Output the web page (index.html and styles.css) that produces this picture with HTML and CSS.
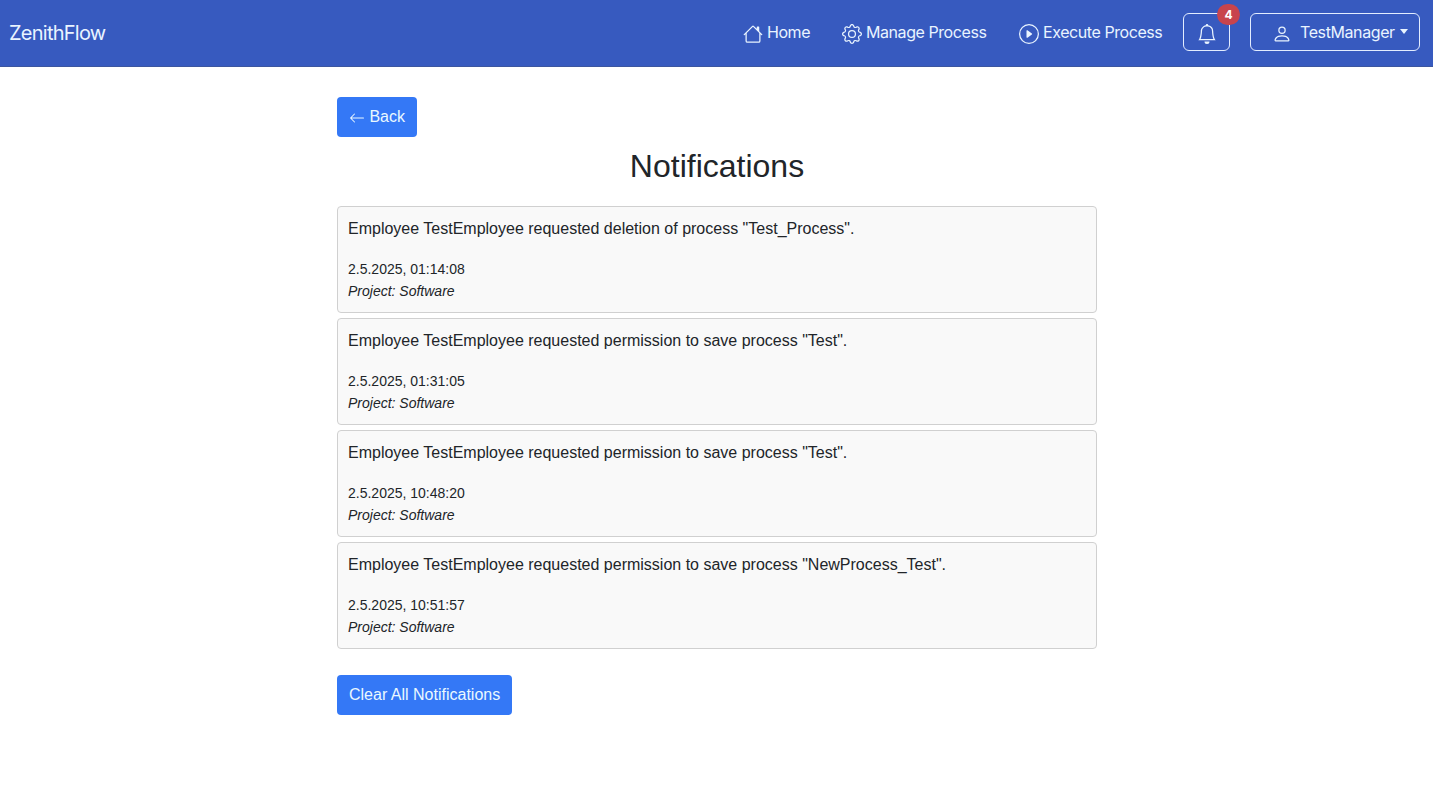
FILE: index.html
```html
<!DOCTYPE html>
<html lang="en">
<head>
<meta charset="utf-8">
<title>ZenithFlow</title>
<link rel="stylesheet" href="styles.css">
</head>
<body>
<header class="navbar">
  <a class="brand">ZenithFlow</a>
  <nav class="links">
    <a class="link home"><svg class="icon" viewBox="0 0 16 16"><path d="M8.707 1.5a1 1 0 0 0-1.414 0L.646 8.146a.5.5 0 0 0 .708.708L2 8.207V13.5A1.5 1.5 0 0 0 3.5 15h9a1.5 1.5 0 0 0 1.5-1.5V8.207l.646.647a.5.5 0 0 0 .708-.708L13 5.793V2.5a.5.5 0 0 0-.5-.5h-1a.5.5 0 0 0-.5.5v1.293zM13 7.207V13.5a.5.5 0 0 1-.5.5h-9a.5.5 0 0 1-.5-.5V7.207l5-5z"/></svg><span>Home</span></a>
    <a class="link manage"><svg class="icon" viewBox="0 0 16 16"><path d="M8 4.754a3.246 3.246 0 1 0 0 6.492 3.246 3.246 0 0 0 0-6.492M5.754 8a2.246 2.246 0 1 1 4.492 0 2.246 2.246 0 0 1-4.492 0"/><path d="M9.796 1.343c-.527-1.79-3.065-1.79-3.592 0l-.094.319a.873.873 0 0 1-1.255.52l-.292-.16c-1.64-.892-3.433.902-2.54 2.541l.159.292a.873.873 0 0 1-.52 1.255l-.319.094c-1.79.527-1.79 3.065 0 3.592l.319.094a.873.873 0 0 1 .52 1.255l-.16.292c-.892 1.64.901 3.434 2.541 2.54l.292-.159a.873.873 0 0 1 1.255.52l.094.319c.527 1.79 3.065 1.79 3.592 0l.094-.319a.873.873 0 0 1 1.255-.52l.292.16c1.64.893 3.434-.902 2.54-2.541l-.159-.292a.873.873 0 0 1 .52-1.255l.319-.094c1.79-.527 1.79-3.065 0-3.592l-.319-.094a.873.873 0 0 1-.52-1.255l.16-.292c.893-1.64-.902-3.433-2.541-2.54l-.292.159a.873.873 0 0 1-1.255-.52zm-2.633.283c.246-.835 1.428-.835 1.674 0l.094.319a1.873 1.873 0 0 0 2.693 1.115l.291-.16c.764-.415 1.6.42 1.184 1.185l-.159.292a1.873 1.873 0 0 0 1.116 2.692l.318.094c.835.246.835 1.428 0 1.674l-.319.094a1.873 1.873 0 0 0-1.115 2.693l.16.291c.415.764-.42 1.6-1.185 1.184l-.291-.159a1.873 1.873 0 0 0-2.693 1.116l-.094.318c-.246.835-1.428.835-1.674 0l-.094-.319a1.873 1.873 0 0 0-2.692-1.115l-.292.16c-.764.415-1.6-.42-1.184-1.185l.159-.291A1.873 1.873 0 0 0 1.945 8.93l-.319-.094c-.835-.246-.835-1.428 0-1.674l.319-.094A1.873 1.873 0 0 0 3.06 4.377l-.16-.292c-.415-.764.42-1.6 1.185-1.184l.292.159a1.873 1.873 0 0 0 2.692-1.115z"/></svg><span>Manage Process</span></a>
    <a class="link execute"><svg class="icon" viewBox="0 0 16 16"><path d="M8 15A7 7 0 1 1 8 1a7 7 0 0 1 0 14m0 1A8 8 0 1 0 8 0a8 8 0 0 0 0 16"/><path d="M6.271 5.055a.5.5 0 0 1 .52.038l3.5 2.5a.5.5 0 0 1 0 .814l-3.5 2.5A.5.5 0 0 1 6 10.5v-5a.5.5 0 0 1 .271-.445"/></svg><span>Execute Process</span></a>
    <button class="outline bell" aria-label="Notifications"><svg class="icon" viewBox="0 0 16 16"><path d="M8 16a2 2 0 0 0 2-2H6a2 2 0 0 0 2 2M8 1.918l-.797.161A4 4 0 0 0 4 6c0 .628-.134 2.197-.459 3.742-.16.767-.376 1.566-.663 2.258h10.244c-.287-.692-.502-1.49-.663-2.258C12.134 8.197 12 6.628 12 6a4 4 0 0 0-3.203-3.92zM14.22 12c.223.447.481.801.78 1H1c.299-.199.557-.553.78-1C2.68 10.2 3 6.88 3 6c0-2.42 1.72-4.44 4.005-4.901a1 1 0 1 1 1.99 0A5 5 0 0 1 13 6c0 .88.32 4.2 1.22 6"/></svg><span class="badge">4</span></button>
    <button class="outline user"><svg class="icon" viewBox="0 0 16 16"><path d="M8 8a3 3 0 1 0 0-6 3 3 0 0 0 0 6m2-3a2 2 0 1 1-4 0 2 2 0 0 1 4 0m4 8c0 1-1 1-1 1H3s-1 0-1-1 1-4 6-4 6 3 6 4m-1-.004c-.001-.246-.154-.986-.832-1.664C11.516 10.68 10.289 10 8 10s-3.516.68-4.168 1.332c-.678.678-.83 1.418-.832 1.664z"/></svg><span>TestManager</span><i class="caret"></i></button>
  </nav>
</header>
<main class="content">
  <button class="btn back"><svg class="arrow" viewBox="0 0 16 16"><path fill-rule="evenodd" d="M15 8a.5.5 0 0 0-.5-.5H2.707l3.147-3.146a.5.5 0 1 0-.708-.708l-4 4a.5.5 0 0 0 0 .708l4 4a.5.5 0 0 0 .708-.708L2.707 8.5H14.5A.5.5 0 0 0 15 8"/></svg>Back</button>
  <h2 class="title">Notifications</h2>
  <ul class="list">
    <li class="card"><p class="message">Employee TestEmployee requested deletion of process "Test_Process".</p><div class="time">2.5.2025, 01:14:08</div><div class="project">Project: Software</div></li>
    <li class="card"><p class="message">Employee TestEmployee requested permission to save process "Test".</p><div class="time">2.5.2025, 01:31:05</div><div class="project">Project: Software</div></li>
    <li class="card"><p class="message">Employee TestEmployee requested permission to save process "Test".</p><div class="time">2.5.2025, 10:48:20</div><div class="project">Project: Software</div></li>
    <li class="card"><p class="message">Employee TestEmployee requested permission to save process "NewProcess_Test".</p><div class="time">2.5.2025, 10:51:57</div><div class="project">Project: Software</div></li>
  </ul>
  <button class="btn clear">Clear All Notifications</button>
</main>
</body>
</html>
```
FILE: styles.css
```css
* { box-sizing: border-box; }
body {
  margin: 0;
  background: #fff;
  color: #212529;
  font: 16px/24px "Liberation Sans", Arial, sans-serif;
}
.navbar {
  display: flex;
  justify-content: space-between;
  height: 67px;
  padding: 13px 13px 0 9px;
  background: #375abf;
  border-bottom: 1px solid #3c569f;
  color: #e9f4ff;
  font-family: Inter, sans-serif;
}
.brand {
  font-size: 20px;
  line-height: 41px;
  letter-spacing: -0.75px;
}
.links { display: flex; align-items: flex-start; }
.link {
  display: flex;
  align-items: center;
  height: 38px;
  letter-spacing: -0.43px;
  white-space: nowrap;
}
.link .icon { margin: 4px 4px 0 0; }
.icon { width: 20px; height: 20px; fill: currentColor; flex: none; }
.home { width: 99px; }
.manage { width: 177px; }
.execute { width: 164px; }
.outline {
  position: relative;
  display: flex;
  align-items: center;
  height: 38px;
  padding: 0;
  border: 1px solid #e3edff;
  border-radius: 6px;
  background: none;
  color: inherit;
  font: 16px/24px Inter, sans-serif;
}
.bell { width: 47px; justify-content: center; margin-right: 20px; }
.bell .icon { margin-top: 4px; }
.badge {
  position: absolute;
  top: -10px;
  right: -11px;
  width: 23px;
  height: 21px;
  border-radius: 11px;
  background: #c8444d;
  color: #fff;
  font-size: 12px;
  font-weight: 700;
  line-height: 21px;
  text-align: center;
}
.user { width: 170px; padding-left: 21px; letter-spacing: -0.4px; }
.user .icon { margin: 4px 8px 0 0; }
.caret {
  margin: -2px 0 0 5px;
  border: 4.5px solid transparent;
  border-top: 5px solid currentColor;
  border-bottom: 0;
}
.content { width: 760px; margin: 30px auto 0 337px; }
.btn {
  display: flex;
  align-items: center;
  height: 40px;
  padding: 0 12px;
  border: 0;
  border-radius: 4px;
  background: #3478f6;
  color: #eaf8ff;
  font: 16px/24px "Liberation Sans", Arial, sans-serif;
}
.arrow { width: 16px; height: 16px; margin: 2px 4.4px 0 0; fill: currentColor; }
.title {
  margin: 10px 0 20px;
  font-size: 32px;
  font-weight: 400;
  line-height: 38.5px;
  text-align: center;
}
.list {
  display: grid;
  gap: 5px;
  margin: 0 0 26px;
  padding: 0;
  list-style: none;
}
.card {
  height: 107px;
  padding: 10px;
  border: 1px solid #d0d0d0;
  border-radius: 4px;
  background: #f9f9f9;
}
.message { margin: 0 0 16px; }
.time, .project { font-size: 14px; }
.project { line-height: 20px; font-style: italic; }
```
